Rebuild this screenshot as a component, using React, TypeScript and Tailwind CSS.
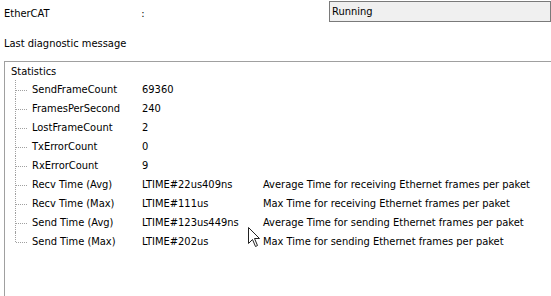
import React from "react";

const rows: [string, string, string][] = [
  ["SendFrameCount", "69360", ""],
  ["FramesPerSecond", "240", ""],
  ["LostFrameCount", "2", ""],
  ["TxErrorCount", "0", ""],
  ["RxErrorCount", "9", ""],
  ["Recv Time (Avg)", "LTIME#22us409ns", "Average Time for receiving Ethernet frames per paket"],
  ["Recv Time (Max)", "LTIME#111us", "Max Time for receiving Ethernet frames per paket"],
  ["Send Time (Avg)", "LTIME#123us449ns", "Average Time for sending Ethernet frames per paket"],
  ["Send Time (Max)", "LTIME#202us", "Max Time for sending Ethernet frames per paket"],
];

export default function App() {
  return (
    <div
      className="relative w-[551px] h-[296px] overflow-hidden bg-white text-black text-[11px] leading-[13px]"
      style={{ fontFamily: "Tahoma, 'DejaVu Sans Condensed', 'Liberation Sans', sans-serif" }}
    >
      <div className="flex items-start h-[22px] pt-[1px]">
        <span className="ml-[4px] w-[139px] mt-[6px]">EtherCAT</span>
        <span className="w-[190px] mt-[6px]">:</span>
        <div className="h-[21px] w-[222px] shrink-0 border border-[#7a7a7a] bg-[#f0f0f0] flex items-center pl-[2px]">
          Running
        </div>
      </div>
      <div className="ml-[4px] mt-[15px]">Last diagnostic message</div>
      <div className="ml-[4px] mt-[11px] h-[300px] border-l border-t border-[#a0a0a0]">
        <div className="pl-[6px] pt-[3px] h-[15px]">Statistics</div>
        <div className="relative ml-[10px] mt-[3px]">
          {rows.map(([label, value, desc], i) => (
            <div key={i} className="relative flex items-center h-[19px]">
              <div
                className="absolute left-0 w-px border-l border-dotted border-[#a0a0a0]"
                style={{ top: 0, height: i === rows.length - 1 ? 10 : 19 }}
              />
              <div className="w-[11px] ml-[1px] border-t border-dotted border-[#a0a0a0] mt-[1px]" />
              <span className="ml-[5px] w-[110px]">{label}</span>
              <span className="w-[121px]">{value}</span>
              <span>{desc}</span>
            </div>
          ))}
        </div>
      </div>
      <svg
        className="absolute left-[248px] top-[227px]"
        width="14"
        height="22"
        viewBox="0 0 14 22"
      >
        <path
          d="M0.5 0.5 L0.5 16.5 L4.5 12.5 L7.5 19.5 L9.5 18.5 L6.5 11.5 L11.5 11.5 Z"
          fill="white"
          stroke="#222"
          strokeWidth="1"
        />
      </svg>
    </div>
  );
}
